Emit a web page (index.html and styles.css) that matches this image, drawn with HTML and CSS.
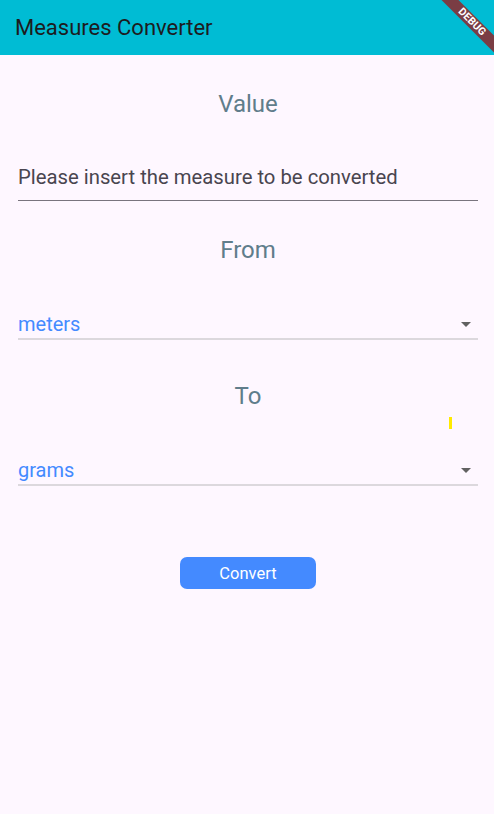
FILE: index.html
```html
<!DOCTYPE html>
<html>
<head>
<meta charset="utf-8">
<link rel="stylesheet" href="styles.css">
</head>
<body>
<header class="appbar">
  <h1 class="title">Measures Converter</h1>
  <div class="banner"><span>DEBUG</span></div>
</header>
<main class="content">
  <div class="label label-value">Value</div>
  <div class="field">
    <span class="hint">Please insert the measure to be converted</span>
  </div>
  <div class="label label-from">From</div>
  <div class="dropdown">
    <span class="dd-text">meters</span>
    <svg class="dd-arrow" width="24" height="24" viewBox="0 0 24 24"><path d="M7 10l5 5 5-5z" fill="#616161"/></svg>
  </div>
  <div class="label label-to">To</div>
  <div class="dropdown">
    <span class="dd-text">grams</span>
    <svg class="dd-arrow" width="24" height="24" viewBox="0 0 24 24"><path d="M7 10l5 5 5-5z" fill="#616161"/></svg>
  </div>
  <div class="btn-row">
    <button class="btn">Convert</button>
  </div>
  <div class="cursor-mark"></div>
</main>
</body>
</html>
```
FILE: styles.css
```css
* { box-sizing: border-box; }
html, body { margin: 0; padding: 0; }
body {
  width: 494px;
  height: 814px;
  background: #fef7ff;
  font-family: Roboto, "Noto Sans", sans-serif;
  overflow: hidden;
  position: relative;
}
.appbar {
  height: 55px;
  background: #00bcd4;
  display: flex;
  align-items: center;
  padding-left: 15px;
  position: relative;
  overflow: hidden;
}
.title {
  margin: 0;
  font-weight: 400;
  font-size: 22px;
  color: #1d1b20;
}
.banner {
  position: absolute;
  top: 0;
  right: 0;
  width: 120px;
  height: 120px;
  overflow: hidden;
}
.banner span {
  position: absolute;
  top: 16px;
  right: -38px;
  width: 120px;
  height: 12px;
  background: #7a3d44;
  color: #fff;
  font-size: 10.5px;
  font-weight: 700;
  line-height: 12px;
  text-align: center;
  transform: rotate(45deg);
  letter-spacing: 0.2px;
}
.content {
  padding: 0 16px 0 18px;
  display: flex;
  flex-direction: column;
  position: relative;
}
.label {
  text-align: center;
  font-size: 24px;
  color: #607d8b;
  line-height: 30px;
  height: 30px;
}
.label-value { margin-top: 34px; }
.label-from { margin-top: 34px; }
.label-to { margin-top: 41px; }
.field {
  margin-top: 46px;
  height: 36px;
  border-bottom: 1px solid #79747e;
  display: flex;
  align-items: flex-start;
}
.hint {
  font-size: 20.3px;
  color: #49454f;
  line-height: 24px;
}
.dropdown {
  margin-top: 47px;
  height: 28px;
  border-bottom: 2px solid #dcd8dd;
  display: flex;
  align-items: flex-start;
  justify-content: space-between;
}
.dd-text {
  font-size: 20px;
  color: #448aff;
  line-height: 24px;
}
.dd-arrow { margin-right: 0; }
.btn-row {
  display: flex;
  justify-content: center;
  margin-top: 71px;
}
.btn {
  width: 136px;
  height: 32px;
  border: none;
  border-radius: 7px;
  background: #448aff;
  color: #fff;
  font-family: Roboto, sans-serif;
  font-size: 16.5px;
  padding: 0;
}
.cursor-mark {
  position: absolute;
  left: 449px;
  top: 362px;
  width: 3px;
  height: 12px;
  background: #ffeb00;
}
```
